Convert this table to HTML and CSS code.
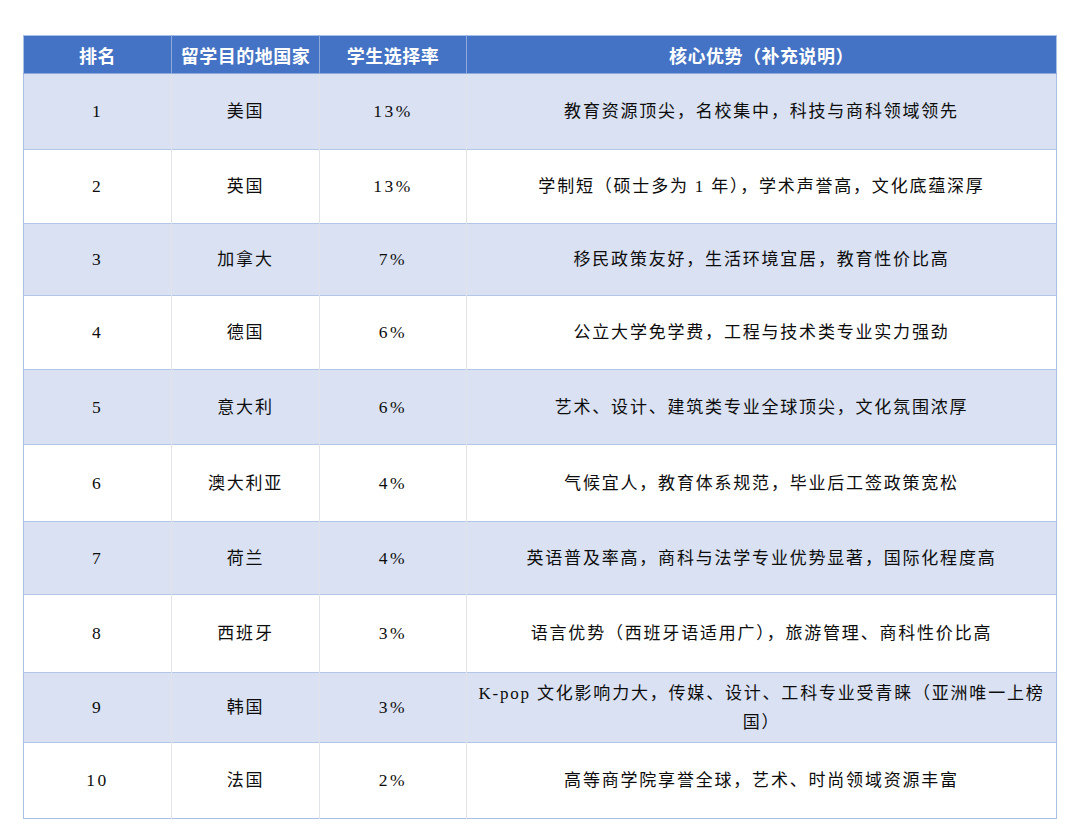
FILE: index.html
```html
<!DOCTYPE html>
<html lang="zh">
<head>
<meta charset="utf-8">
<link rel="stylesheet" href="styles.css">
</head>
<body>
<div class="page">
<table class="rank">
<thead>
<tr><th>排名</th><th>留学目的地国家</th><th>学生选择率</th><th>核心优势（补充说明）</th></tr>
</thead>
<tbody>
<tr><td class="num">1</td><td>美国</td><td class="num">13%</td><td>教育资源顶尖，名校集中，科技与商科领域领先</td></tr>
<tr><td class="num">2</td><td>英国</td><td class="num">13%</td><td>学制短（硕士多为 1 年），学术声誉高，文化底蕴深厚</td></tr>
<tr><td class="num">3</td><td>加拿大</td><td class="num">7%</td><td>移民政策友好，生活环境宜居，教育性价比高</td></tr>
<tr><td class="num">4</td><td>德国</td><td class="num">6%</td><td>公立大学免学费，工程与技术类专业实力强劲</td></tr>
<tr><td class="num">5</td><td>意大利</td><td class="num">6%</td><td>艺术、设计、建筑类专业全球顶尖，文化氛围浓厚</td></tr>
<tr><td class="num">6</td><td>澳大利亚</td><td class="num">4%</td><td>气候宜人，教育体系规范，毕业后工签政策宽松</td></tr>
<tr><td class="num">7</td><td>荷兰</td><td class="num">4%</td><td>英语普及率高，商科与法学专业优势显著，国际化程度高</td></tr>
<tr><td class="num">8</td><td>西班牙</td><td class="num">3%</td><td>语言优势（西班牙语适用广），旅游管理、商科性价比高</td></tr>
<tr><td class="num">9</td><td>韩国</td><td class="num">3%</td><td>K-pop 文化影响力大，传媒、设计、工科专业受青睐（亚洲唯一上榜国）</td></tr>
<tr><td class="num">10</td><td>法国</td><td class="num">2%</td><td>高等商学院享誉全球，艺术、时尚领域资源丰富</td></tr>
</tbody>
</table>
</div>
</body>
</html>
```

FILE: styles.css
```css
html, body {
  margin: 0;
  padding: 0;
  background: #ffffff;
}

.page {
  padding: 35px 22px 0 23px;
}

.rank {
  width: 1034px;
  border-collapse: collapse;
  table-layout: fixed;
  font-family: "Liberation Serif", "Noto Sans CJK SC", serif;
  color: #0d0d0d;
  border: 1px solid #a9bfe6;
}

.rank th:nth-child(1), .rank td:nth-child(1) { width: 147px; }
.rank th:nth-child(2), .rank td:nth-child(2) { width: 147px; }
.rank th:nth-child(3), .rank td:nth-child(3) { width: 146px; }

.rank th {
  background: #4472c4;
  color: #ffffff;
  font-family: "Noto Sans CJK SC", sans-serif;
  font-weight: 700;
  font-size: 18px;
  height: 37px;
  padding: 0;
  text-align: center;
  border-left: 1px solid #8eaadb;
  border-bottom: 1px solid #8eaadb;
  letter-spacing: 0.5px;
}

.rank th:first-child { border-left: none; }

.rank td {
  text-align: center;
  vertical-align: middle;
  font-size: 17px;
  line-height: 29px;
  letter-spacing: 1.8px;
  padding: 0 5px;
  border-left: 1px solid #e2e3e8;
  border-top: 1px solid #b4c6e7;
}

.rank td:first-child { border-left: none; }

.rank td.num {
  font-size: 17.5px;
  letter-spacing: 2.5px;
}

.rank tbody tr:nth-child(odd) td { background: #d9e1f2; }
.rank tbody tr:nth-child(even) td { background: #ffffff; }

.rank tbody tr:nth-child(1) { height: 76px; }
.rank tbody tr:nth-child(2) { height: 74px; }
.rank tbody tr:nth-child(3) { height: 72px; }
.rank tbody tr:nth-child(4) { height: 74px; }
.rank tbody tr:nth-child(5) { height: 75px; }
.rank tbody tr:nth-child(6) { height: 77px; }
.rank tbody tr:nth-child(7) { height: 73px; }
.rank tbody tr:nth-child(8) { height: 78px; }
.rank tbody tr:nth-child(9) { height: 70px; }
.rank tbody tr:nth-child(10) { height: 76px; }
```
